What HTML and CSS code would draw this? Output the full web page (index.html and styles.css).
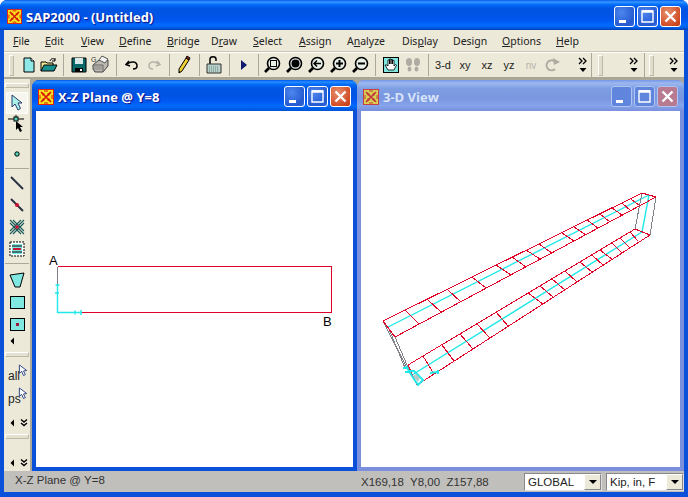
FILE: index.html
```html
<!DOCTYPE html>
<html lang="en">
<head>
<meta charset="utf-8">
<title>SAP2000</title>
<link rel="stylesheet" href="styles.css">
</head>
<body>
<svg class="defs" width="0" height="0" aria-hidden="true">
  <symbol id="logo" viewBox="0 0 16 16">
    <rect x="0.5" y="0.5" width="15" height="15" fill="#f8e020" stroke="#e02010"/>
    <path d="M3 3 7 5 5 7ZM13 3 11 7 9 5ZM13 13 9 11 11 9ZM3 13 5 9 7 11Z" fill="#d81808"/>
    <path d="M3 3 13 13M13 3 3 13" stroke="#d81808" stroke-width="1.6"/>
    <path d="M6 2h4M6 14h4M2 6v4M14 6v4" stroke="#d81808"/>
  </symbol>
  <symbol id="btnmin" viewBox="0 0 21 21"><rect x="5" y="14" width="7" height="3" fill="#fff"/></symbol>
  <symbol id="btnmax" viewBox="0 0 21 21"><path d="M5 5h11v11H5Z" fill="none" stroke="#fff" stroke-width="1.4"/><path d="M5 5.5h11" stroke="#fff" stroke-width="2.5"/></symbol>
  <symbol id="btnclose" viewBox="0 0 21 21"><path d="M5.5 5.5 15.5 15.5M15.5 5.5 5.5 15.5" stroke="#fff" stroke-width="2.4"/></symbol>
  <symbol id="zoomring" viewBox="0 0 18 18"><path d="M2 16 6 12" stroke="#000" stroke-width="2.6"/><circle cx="10.5" cy="7.5" r="6" fill="#e8f0e8" stroke="#000" stroke-width="1.6"/></symbol>
  <symbol id="chev" viewBox="0 0 10 18"><path d="M1 2 4 5 1 8M5 2 8 5 5 8" fill="none" stroke="#000" stroke-width="1.3"/><path d="M1.500 12h7L5 16Z" fill="#000"/></symbol>
  <symbol id="cursor" viewBox="0 0 12 14"><path d="M1.500 1 1.500 10 4 8 6 12.500 8 11.500 6 7.500 9.500 7Z" fill="#fff" stroke="#223a80"/></symbol>
  <symbol id="small" viewBox="0 0 22 10"><path d="M8 1.500v7L4.500 5Z" fill="#000"/><path d="M15 1.500 18 4 21 1.500M15 5 18 7.500 21 5" fill="none" stroke="#000" stroke-width="1.400"/></symbol>
</svg>

<div class="app">
  <header class="titlebar">
    <svg class="tlogo"><use href="#logo"/></svg>
    <span class="ttext">SAP2000 - (Untitled)</span>
    <div class="tbtns">
      <span class="wb"><svg width="21" height="21"><use href="#btnmin"/></svg></span>
      <span class="wb"><svg width="21" height="21"><use href="#btnmax"/></svg></span>
      <span class="wb wb-close"><svg width="21" height="21"><use href="#btnclose"/></svg></span>
    </div>
  </header>

  <nav class="menu">
    <span><u>F</u>ile</span><span><u>E</u>dit</span><span><u>V</u>iew</span><span><u>D</u>efine</span><span><u>B</u>ridge</span><span>D<u>r</u>aw</span><span><u>S</u>elect</span><span><u>A</u>ssign</span><span>A<u>n</u>alyze</span><span>Dis<u>p</u>lay</span><span>Desi<u>g</u>n</span><span><u>O</u>ptions</span><span><u>H</u>elp</span>
  </nav>

  <div class="toolbar">
    <span class="grip"></span>
    <span class="tb tb-n"><svg width="14" height="16" viewBox="0 0 14 16"><path d="M2 1h7l3 3v11H2Z" fill="#8fe8e8" stroke="#000"/><path d="M9 1v3h3" fill="#fff" stroke="#000"/></svg></span>
    <span class="tb tb-n"><svg width="18" height="16" viewBox="0 0 18 16"><path d="M1 14V5h5l1 1h6v2" fill="#f0e890" stroke="#000"/><path d="M1 14 4 8h13l-3 6Z" fill="#189090" stroke="#000"/><path d="M10 4C11 1 14 1 15 3M15 1v3h-3" fill="none" stroke="#000"/></svg></span>
    <span class="sep sep-w"></span>
    <span class="tb"><svg width="16" height="16" viewBox="0 0 16 16"><path d="M1 1h14v14H1Z" fill="#0a6868" stroke="#000"/><path d="M4 1h8v6H4Z" fill="#d8e8e8"/><path d="M4 11h8v4H4Z" fill="#000"/><path d="M9 12h2v2H9Z" fill="#fff"/></svg></span>
    <span class="tb"><svg width="20" height="20" viewBox="0 0 20 20"><path d="M2 10 8 5h9v6l-5 6H4L2 14Z" fill="#bdb8b0" stroke="#444"/><path d="M8 5 11 1 17 4 14 8Z" fill="#f4f4f4" stroke="#555"/><path d="M2 10h10v7" fill="none" stroke="#666"/><path d="M3 12h8M3 14h8" stroke="#888"/><text class="pg" x="0" y="7">G</text></svg></span>
    <span class="sep sep-w"></span>
    <span class="tb"><svg width="14" height="12" viewBox="0 0 14 12"><path d="M4 2 1 5.500 5 7" fill="none" stroke="#000" stroke-width="1.500"/><path d="M2 5C6 2 12 2 12 7 12 9 10 10 8 10" fill="none" stroke="#000" stroke-width="1.500"/></svg></span>
    <span class="tb"><svg width="14" height="12" viewBox="0 0 14 12"><path d="M10 2 13 5.500 9 7" fill="none" stroke="#b4b2a8" stroke-width="1.500"/><path d="M12 5C8 2 2 2 2 7 2 9 4 10 6 10" fill="none" stroke="#b4b2a8" stroke-width="1.500"/></svg></span>
    <span class="sep"></span>
    <span class="tb"><svg width="14" height="20" viewBox="0 0 14 20"><path d="M9 3 12 5 5 16 2 18 2 14Z" fill="#f0d030" stroke="#000"/><path d="M9 3 10 1 13 3 12 5Z" fill="#a02020" stroke="#000"/><path d="M2 18 2 16 3.500 17Z" fill="#000"/></svg></span>
    <span class="sep"></span>
    <span class="tb"><svg width="16" height="20" viewBox="0 0 16 20"><path d="M4 9V4C4 1 10 1 10 4V6" fill="none" stroke="#000" stroke-width="1.500"/><path d="M1 9h14v9H1Z" fill="#b8d0c8" stroke="#333"/><path d="M3 12h10M3 14h10M3 16h10" stroke="#688" stroke-dasharray="1 1"/></svg></span>
    <span class="sep"></span>
    <span class="tb"><svg width="6" height="10" viewBox="0 0 6 10"><path d="M0 0 6 5 0 10Z" fill="#101870"/></svg></span>
    <span class="sep sep-n"></span>
    <span class="tb"><svg class="zi" viewBox="0 0 18 18"><use href="#zoomring"/><rect x="7.500" y="4.500" width="6" height="6" fill="none" stroke="#000"/></svg></span>
    <span class="tb"><svg class="zi" viewBox="0 0 18 18"><use href="#zoomring"/><circle cx="10.500" cy="7.500" r="4" fill="#000"/></svg></span>
    <span class="tb"><svg class="zi" viewBox="0 0 18 18"><use href="#zoomring"/><path d="M7 7.500h7M10 4.500 7 7.500 10 10.500" fill="none" stroke="#000" stroke-width="1.500"/></svg></span>
    <span class="tb"><svg class="zi" viewBox="0 0 18 18"><use href="#zoomring"/><path d="M7 7.500h7M10.500 4v7" stroke="#000" stroke-width="2"/></svg></span>
    <span class="tb"><svg class="zi" viewBox="0 0 18 18"><use href="#zoomring"/><path d="M7 7.500h7" stroke="#000" stroke-width="2"/></svg></span>
    <span class="sep sep-w"></span>
    <span class="tb"><svg width="16" height="16" viewBox="0 0 16 16"><rect x="0.500" y="0.500" width="15" height="15" fill="#80e8e0" stroke="#000"/><path d="M5 13 2 8 4 8 5 9V3H6.500V7 2H8V7 2.500H9.500V7 3.500H11V9L12.500 7.500 13.500 8 11 13Z" fill="#fff" stroke="#000" stroke-width="0.800"/></svg></span>
    <span class="tb"><svg width="16" height="16" viewBox="0 0 16 16" fill="#aeaca2"><ellipse cx="4" cy="5" rx="3" ry="4"/><ellipse cx="4.500" cy="12" rx="2" ry="2.500"/><ellipse cx="12" cy="5" rx="3" ry="4"/><ellipse cx="11.500" cy="12" rx="2" ry="2.500"/></svg></span>
    <span class="sep"></span>
    <span class="tb tx">3-d</span><span class="tb tx">xy</span><span class="tb tx">xz</span><span class="tb tx">yz</span><span class="tb tx off">nv</span>
    <span class="tb"><svg width="16" height="14" viewBox="0 0 16 14"><path d="M9 3A5 5 0 1 0 10 11" fill="none" stroke="#aeaca2" stroke-width="2"/><path d="M8 0 15 4 9 7Z" fill="#aeaca2"/></svg></span>
    <span class="chev chev-1"><svg width="10" height="18"><use href="#chev"/></svg></span>
    <span class="sep sep-short"></span>
    <span class="grip grip-2"></span>
    <span class="chev chev-2"><svg width="10" height="18"><use href="#chev"/></svg></span>
    <span class="sep sep-short"></span>
    <span class="grip grip-3"></span>
    <span class="chev chev-3"><svg width="10" height="18"><use href="#chev"/></svg></span>
  </div>

  <main class="work">
    <aside class="side">
      <div class="hgrip hgrip-top"></div>
      <span class="si si-on"><svg width="14" height="18" viewBox="0 0 14 18"><path d="M2 1v12l3-3 3 6 2.500-1.500L8 9h4Z" fill="#a8f0e8" stroke="#2a3a70"/></svg></span>
      <span class="si"><svg width="18" height="20" viewBox="0 0 18 20"><path d="M0 4h16M8 0v5" stroke="#000"/><rect x="6" y="2" width="4" height="4" fill="#50d8b8" stroke="#000"/><path d="M8 6v9l2-2 2 4 2-1-2-4h3Z" fill="#000"/></svg></span>
      <span class="hsep"></span>
      <span class="si"><svg width="8" height="8" viewBox="0 0 8 8"><circle cx="4" cy="4" r="2.200" fill="#50d8b8" stroke="#000"/></svg></span>
      <span class="hsep"></span>
      <span class="si"><svg width="16" height="16" viewBox="0 0 16 16"><path d="M2 2 14 14" stroke="#2a3040" stroke-width="2"/></svg></span>
      <span class="si"><svg width="16" height="16" viewBox="0 0 16 16"><path d="M2 2 14 14" stroke="#2a3040" stroke-width="2"/><circle cx="8" cy="8" r="2" fill="#c81030"/></svg></span>
      <span class="si"><svg width="16" height="16" viewBox="0 0 16 16"><path d="M1 1 15 15M15 1 1 15M1 4 12 15M4 1 15 12M15 4 4 15M12 1 1 12" stroke="#185858" stroke-width="1.100"/><circle cx="8" cy="8" r="1.800" fill="#c81030"/></svg></span>
      <span class="si"><svg width="16" height="16" viewBox="0 0 16 16"><rect x="1" y="1" width="14" height="14" fill="#fff" stroke="#000" stroke-dasharray="2 1"/><rect x="3" y="3" width="10" height="10" fill="#80e8e0"/><path d="M3 5h10M3 11h10" stroke="#000"/><rect x="4" y="7" width="8" height="2" fill="#c81030"/></svg></span>
      <span class="hsep hsep-wide"></span>
      <span class="si"><svg width="16" height="16" viewBox="0 0 16 16"><path d="M1 3 15 1 11 15H6Z" fill="#80e8e0" stroke="#000"/></svg></span>
      <span class="si"><svg width="15" height="13" viewBox="0 0 15 13"><rect x="0.500" y="0.500" width="14" height="12" fill="#80e8e0" stroke="#000"/></svg></span>
      <span class="si"><svg width="15" height="13" viewBox="0 0 15 13"><rect x="0.500" y="0.500" width="14" height="12" fill="#80e8e0" stroke="#000"/><rect x="6" y="5" width="3" height="3" fill="#a01838"/></svg></span>
      <span class="sm sm-left"><svg width="22" height="10"><path d="M8 1.500v7L4.500 5Z" fill="#000"/></svg></span>
      <div class="hgrip hgrip-mid"></div>
      <span class="si si-tx">all<svg class="curs" width="11" height="13"><use href="#cursor"/></svg></span>
      <span class="si si-tx">ps<svg class="curs" width="11" height="13"><use href="#cursor"/></svg></span>
      <span class="sm sm-a"><svg width="22" height="10"><use href="#small"/></svg></span>
      <div class="hgrip hgrip-mid2"></div>
      <span class="sm sm-b"><svg width="22" height="10"><use href="#small"/></svg></span>
    </aside>

    <section class="win">
      <div class="wtitle">
        <svg class="wlogo"><use href="#logo"/></svg>
        <span class="wtext">X-Z Plane @ Y=8</span>
        <div class="tbtns">
          <span class="wb"><svg width="21" height="21"><use href="#btnmin"/></svg></span>
          <span class="wb"><svg width="21" height="21"><use href="#btnmax"/></svg></span>
          <span class="wb wb-close"><svg width="21" height="21"><use href="#btnclose"/></svg></span>
        </div>
      </div>
      <div class="client">
        <svg class="plot" width="317" height="355" viewBox="36 111 317 355">
          <text class="lbl" x="49" y="265">A</text>
          <text class="lbl" x="323" y="326">B</text>
          <path class="red" d="M57.500 266.500H331.500V312.500H82"/>
          <path class="grey" d="M57.500 266.500V285"/>
          <path class="cy" d="M57.500 285V312.500H82"/>
          <path class="cy" d="M55.500 285h4M55 293h4M75 310.500v4M81 310v5"/>
        </svg>
      </div>
    </section>

    <section class="win win-off">
      <div class="wtitle">
        <svg class="wlogo"><use href="#logo"/></svg>
        <span class="wtext">3-D View</span>
        <div class="tbtns">
          <span class="wb"><svg width="21" height="21"><use href="#btnmin"/></svg></span>
          <span class="wb"><svg width="21" height="21"><use href="#btnmax"/></svg></span>
          <span class="wb wb-close"><svg width="21" height="21"><use href="#btnclose"/></svg></span>
        </div>
      </div>
      <div class="client">
        <svg class="plot" width="319" height="355" viewBox="361 111 319 355">
          <path class="cy" d="M388 327 649 195M412 375 642 232M649 195 642 232"/>
          <path class="grey" d="M642 193 635 229M656 197 650 235M383 321 406 366M395 337 410 372M389 329 405 368"/>
          <path class="red" d="M383 321 642 193 656 197 395 337 383 321M408 365 635 229 650 235 417 385 408 365"/>
          <path class="red" d="M405 310 419 324M427 299 441 312M447 289 461 302M472 277 486 288M496 265 511 275M512 257 526 267M526 250 540 259M539 244 552 253M562 233 574 241M574 227 586 235M587 220 598 228M600 214 610 222M612 208 622 215M622 203 631 211M631 199 640 206"/>
          <path class="red" d="M423 356 434 374M442 345 454 361M460 334 473 349M477 324 490 338M496 312 508 326M528 293 543 304M540 286 553 297M552 279 565 290M565 271 577 282M580 262 592 272M592 255 603 265M600 250 612 259M612 243 622 253M620 238 630 248M630 232 638 241"/>
          <path class="cyb" d="M406 366 412 376 418 385 423 380 414 371 409 371ZM403 368h5M405 372h5M430 373l7 -1M438 370v4"/>
          <path class="gr-fill" d="M413 376 418 382 420 378 416 374Z"/>
        </svg>
      </div>
    </section>
  </main>

  <footer class="status">
    <span class="st-left">X-Z Plane @ Y=8</span>
    <span class="st-coords">X169,18&nbsp; Y8,00&nbsp; Z157,88</span>
    <span class="combo combo-a"><span class="cv">GLOBAL</span><span class="ca"></span></span>
    <span class="combo"><span class="cv">Kip, in, F</span><span class="ca"></span></span>
  </footer>
</div>
</body>
</html>
```

FILE: styles.css
```css
* { box-sizing: border-box; }
html, body { margin: 0; padding: 0; }
body { width: 688px; height: 497px; overflow: hidden; font-family: "Liberation Sans", Arial, sans-serif; font-size: 11px; color: #000; }
.defs { position: absolute; }
svg { display: block; }

.app { width: 688px; height: 497px; display: flex; flex-direction: column; background: #0a50d8; padding: 0 4px 5px; border-radius: 7px 7px 0 0; overflow: hidden; }

.titlebar { height: 30px; margin: 0 -4px; padding: 3px 6px 0 7px; flex: none; display: flex; align-items: center;
  background: linear-gradient(#0058ee 0, #3593ff 6%, #288eff 9%, #127dff 12%, #036ffc 15%, #0262ee 20%, #0057e5 28%, #0054e3 40%, #0055eb 60%, #005bf5 72%, #026afe 82%, #0062ef 90%, #0052d6 95%, #0040ab 100%); }
.tlogo { width: 15px; height: 15px; margin-right: 4px; }
.ttext { color: #fff; font: bold 13px "Open Sans", sans-serif; text-shadow: 1px 1px 1px #0f1089; }
.tbtns { margin-left: auto; display: flex; gap: 2px; }
.titlebar .tbtns { margin-right: 1px; }
.wb { width: 21px; height: 21px; border: 1px solid #fff; border-radius: 3px; background: radial-gradient(circle at 35% 30%, #4d86ee, #2358d0 75%, #3e72e0); display: block; overflow: hidden; }
.wb svg { margin: -1px; }
.wb-close { background: radial-gradient(circle at 35% 30%, #e8906e, #cf4a22 75%, #b83a16); }

.menu { height: 22px; flex: none; background: #ece9d8; display: grid; grid-template-columns: 32px 36px 38px 48px 44px 42px 46px 48px 55px 51px 49px 54px auto; align-items: center; padding: 1px 0 0 9px; border-bottom: 1px solid #c9c6b4; color: #222; font-family: "Noto Sans", sans-serif; font-size: 10.500px; }
.menu u { text-underline-offset: 1px; }

.toolbar { height: 27px; flex: none; background: #ece9d8; display: flex; align-items: center; border-top: 1px solid #fff; border-bottom: 2px solid #a9a696; padding-left: 5px; }
.grip { width: 5px; height: 21px; margin-right: 5px; border: 1px solid #bdbaa8; border-top-color: #fff; border-left-color: #fff; background: #e0ddcc; flex: none; }
.tb { width: 22px; height: 22px; display: flex; align-items: center; justify-content: center; flex: none; }
.tb-n { width: 20px; }
.sep { width: 8px; height: 22px; flex: none; background: linear-gradient(#aca899, #aca899) center / 1px 100% no-repeat; }
.sep-w { width: 9px; }
.sep-n { width: 6px; }
.sep-short { height: 24px; width: 5px; }
.zi { width: 18px; height: 18px; }
.tx { font-family: "Liberation Sans", sans-serif; font-size: 11px; color: #222; }
.off { color: #b4b2a8; font-size: 10px; }
.pg { font-size: 7px; fill: #333; font-family: "Liberation Sans", sans-serif; }
.chev { flex: none; width: 10px; height: 18px; }
.chev-1 { margin-left: 14px; margin-right: 1px; }
.chev-2 { margin-left: 26px; margin-right: 3px; }
.chev-3 { margin-left: 15px; }
.grip-2 { margin-right: 0; margin-left: 4px; }
.grip-3 { margin-right: 0; margin-left: 2px; }

.work { flex: 1; min-height: 0; display: flex; background: #aca899; }

.side { width: 28px; flex: none; background: #ece9d8; border-right: 2px solid #aca899; display: flex; flex-direction: column; align-items: center; padding-top: 4px; }
.hgrip { width: 24px; height: 5px; border: 1px solid #bdbaa8; border-top-color: #fff; border-left-color: #fff; background: #e4e1d0; flex: none; margin-bottom: 7px; }
.hgrip-top { margin-bottom: 4px; }
.si { width: 22px; height: 22px; flex: none; display: flex; align-items: center; justify-content: center; position: relative; }
.si-on { background: #f6f5ee; border: 1px solid #fff; }
.si-tx { font-size: 12px; color: #222; justify-content: flex-start; padding-left: 2px; padding-top: 3px; height: 23px; }
.curs { position: absolute; left: 12px; top: 1px; }
.hsep { width: 24px; height: 1px; background: #aca899; margin: 3px 0; flex: none; }
.hsep-wide { margin-bottom: 5px; }
.sm { width: 22px; height: 10px; flex: none; display: block; }
.sm-left { margin-top: 1px; }
.hgrip-mid { margin-top: 6px; margin-bottom: 6px; }
.sm-a { margin-top: 9px; }
.hgrip-mid2 { margin-top: 6px; }
.sm-b { margin-top: 12px; }

.win { flex: 1 1 0; display: flex; flex-direction: column; background: #0a50d8; padding: 0 4px 4px; border-radius: 7px 7px 0 0; margin-top: 1px; overflow: hidden; }
.win:first-of-type { flex: 0 0 325px; }
.wtitle { height: 31px; margin: 0 -4px; padding: 2px 6px 0; flex: none; display: flex; align-items: center;
  background: linear-gradient(#0058ee 0, #288eff 7%, #036ffc 13%, #0057e5 26%, #0054e3 45%, #0055eb 60%, #005bf5 72%, #026afe 82%, #0062ef 90%, #0052d6 100%); }
.wlogo { width: 16px; height: 16px; margin-right: 4px; }
.wtext { color: #fff; font: bold 13px "Open Sans", sans-serif; text-shadow: 1px 1px 1px #0f1089; }
.client { flex: 1; min-height: 0; background: #fff; overflow: hidden; }

.win-off { background: #7a90dc; }
.win-off .wtitle { background: linear-gradient(#7697e7, #9cb8f0 10%, #7e9ee3 28%, #7a96df 60%, #85a4ea 82%, #7a90dc 100%); }
.win-off .wtext { color: #d8e4f8; text-shadow: none; }
.win-off .wlogo { opacity: 0.75; }
.win-off .wb { background: #5f86dc; border-color: #b0c4f0; }
.win-off .wb-close { background: #b87a90; }

.plot { display: block; }
.red { fill: none; stroke: #e00028; stroke-width: 1; shape-rendering: crispEdges; }
.grey { fill: none; stroke: #808088; stroke-width: 1; shape-rendering: crispEdges; }
.cy { fill: none; stroke: #20e8e8; stroke-width: 1.400; }
.cyb { fill: none; stroke: #20e8e8; stroke-width: 2; }
.gr-fill { fill: #b8c8c8; }
.lbl { font: 13px "Liberation Sans", sans-serif; fill: #000; }

.status { height: 21px; flex: none; background: #c0bfbc; display: flex; align-items: center; font-size: 11.500px; color: #333; padding-left: 11px; }
.st-left { width: 346px; margin-top: -4px; }
.st-coords { width: 163px; }
.combo { width: 78px; height: 18px; background: #fff; border: 1px solid #888; border-right-color: #ddd; border-bottom-color: #ddd; display: flex; align-items: center; color: #222; padding-left: 3px; font-size: 11.500px; }
.combo-a { margin-right: 4px; }
.cv { flex: 1; }
.ca { width: 17px; height: 16px; background: #ece9d8; border: 1px solid #fff; border-right-color: #888; border-bottom-color: #888; position: relative; }
.ca::after { content: ""; position: absolute; left: 4px; top: 5px; border: 4px solid transparent; border-top-color: #000; border-bottom: 0; }
```
